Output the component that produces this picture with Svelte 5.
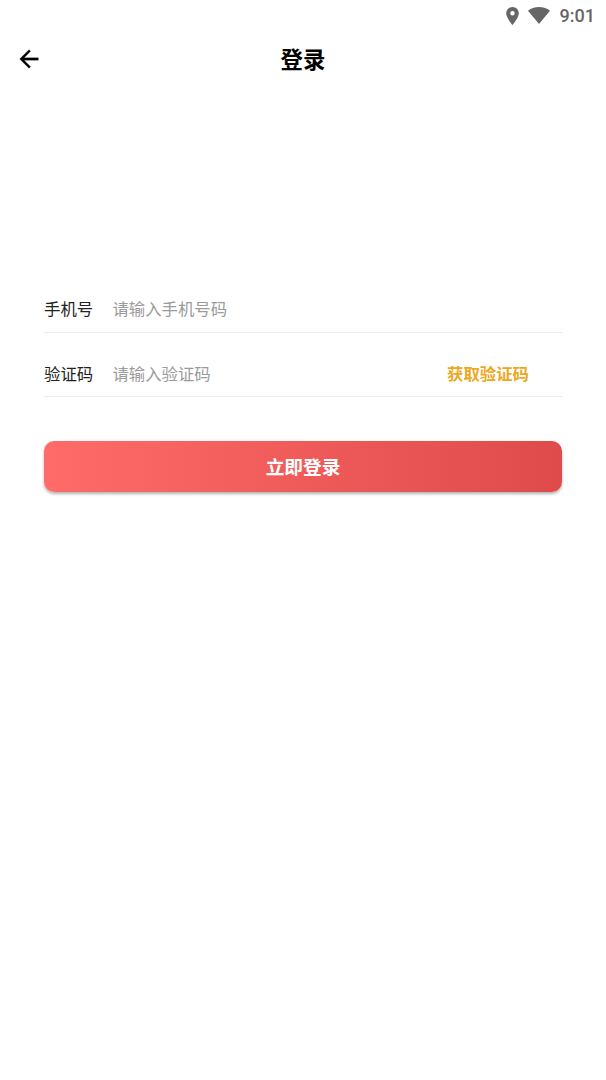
<script>
  let phone = '';
  let code = '';
</script>

<div class="page">
  <div class="status">
    <svg class="pin" viewBox="5 2 14 20">
      <path d="M12 2C8.13 2 5 5.13 5 9c0 5.25 7 13 7 13s7-7.75 7-13c0-3.87-3.13-7-7-7zm0 9.5a2.5 2.5 0 1 1 0-5 2.5 2.5 0 0 1 0 5z" />
    </svg>
    <svg class="wifi" viewBox="0 0 22 17">
      <path d="M11 17L0 3.8C3 1.2 6.7 0 11 0s8 1.2 11 3.8z" />
    </svg>
    <span class="time">9:01</span>
  </div>

  <header>
    <button class="back" aria-label="返回">
      <svg viewBox="0 0 24 24">
        <path d="M20 11H7.83l5.59-5.59L12 4l-8 8 8 8 1.41-1.41L7.83 13H20v-2z" />
      </svg>
    </button>
    <h1>登录</h1>
  </header>

  <form on:submit|preventDefault>
    <div class="field">
      <label for="phone">手机号</label>
      <input id="phone" type="tel" placeholder="请输入手机号码" bind:value={phone} />
    </div>
    <div class="field">
      <label for="code">验证码</label>
      <input id="code" type="text" placeholder="请输入验证码" bind:value={code} />
      <button type="button" class="send">获取验证码</button>
    </div>
    <button type="submit" class="login">立即登录</button>
  </form>
</div>

<style>
  :global(body) {
    background: #fff;
  }
  .page {
    box-sizing: border-box;
    min-height: 1080px;
    background: #fff;
    color: #222;
    font-family: Roboto, "Noto Sans CJK SC", sans-serif;
  }
  button {
    padding: 0;
    border: 0;
    background: none;
    font-family: inherit;
    cursor: pointer;
  }
  svg {
    display: block;
    fill: currentColor;
  }
  .status {
    box-sizing: border-box;
    display: flex;
    align-items: center;
    justify-content: flex-end;
    height: 32px;
    padding-right: 11px;
    color: #666;
  }
  .pin {
    width: 13px;
    height: 18px;
    margin-right: 9px;
    margin-top: -1px;
  }
  .wifi {
    width: 22px;
    height: 17px;
    margin-right: 10px;
    margin-top: -2px;
  }
  .time {
    font-size: 18px;
    font-weight: 500;
    line-height: 32px;
  }
  header {
    display: grid;
    grid-template-columns: 28px 1fr 28px;
    align-items: center;
    height: 54px;
    padding: 0 15px;
    color: #000;
  }
  .back {
    color: inherit;
  }
  .back svg {
    width: 28px;
    height: 28px;
    stroke: currentColor;
    stroke-width: 0.2;
  }
  h1 {
    margin: 0;
    padding-top: 2px;
    font-size: 22.4px;
    font-weight: 700;
    line-height: 32px;
    text-align: center;
  }
  form {
    padding: 200px 44px 0;
  }
  .field {
    box-sizing: border-box;
    display: flex;
    align-items: center;
    height: 47px;
    border-bottom: 1px solid #ebebeb;
    font-size: 16.4px;
    line-height: 24px;
  }
  label,
  input {
    padding: 2px 0 0;
  }
  .field + .field {
    margin-top: 17px;
  }
  .field + .field label,
  .field + .field input {
    padding-top: 4px;
  }
  label {
    width: 68.4px;
  }
  input {
    flex: 1;
    min-width: 0;
    border: 0;
    outline: 0;
    background: none;
    color: inherit;
    font: inherit;
  }
  input::placeholder {
    color: #9b9b9b;
    opacity: 1;
  }
  .send {
    margin-right: 33px;
    color: #eda821;
    font-size: 16.4px;
    font-weight: 700;
  }
  .login {
    display: block;
    width: 100%;
    height: 51px;
    margin-top: 44px;
    padding-bottom: 2px;
    border-radius: 10px;
    background: linear-gradient(90deg, #ff6b68, #df4b4b);
    box-shadow: 0 2px 3px rgba(0, 0, 0, 0.3);
    color: #fff;
    font-size: 18.7px;
    font-weight: 700;
  }
</style>
